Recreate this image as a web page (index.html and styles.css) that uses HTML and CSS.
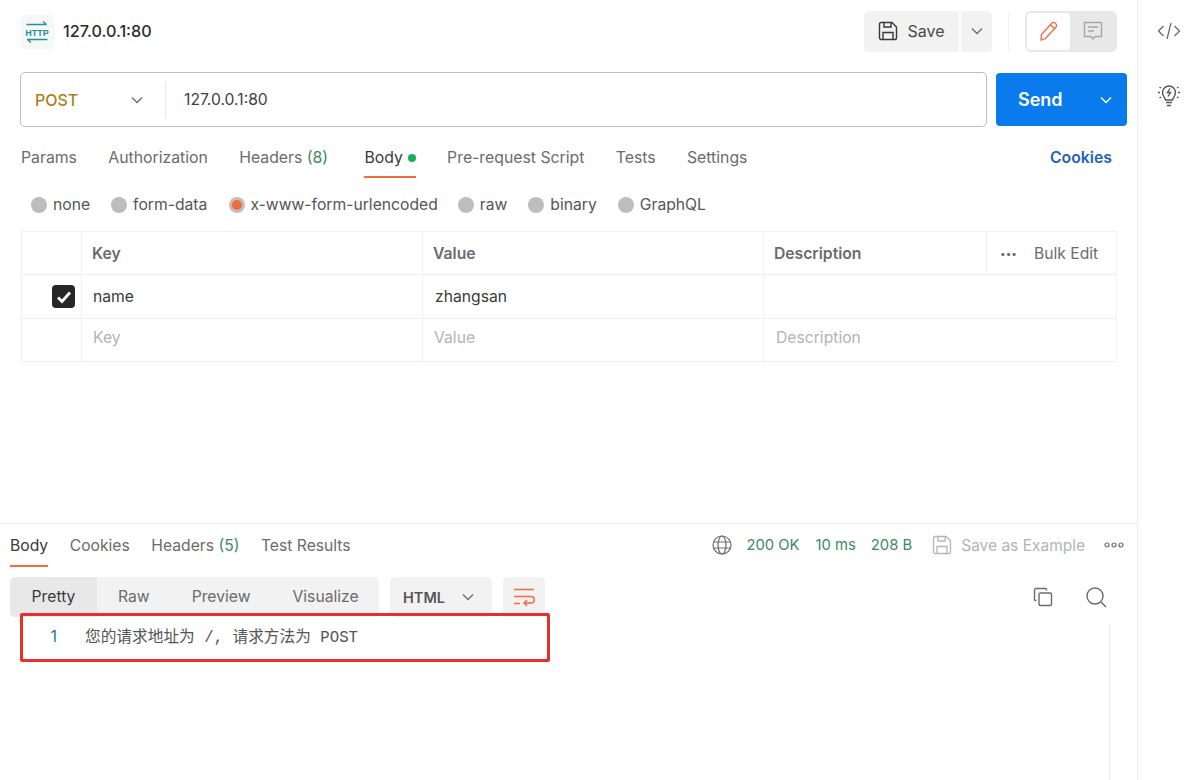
FILE: index.html
```html
<!DOCTYPE html>
<html lang="zh">
<head>
<meta charset="utf-8">
<title>127.0.0.1:80</title>
<link rel="stylesheet" href="styles.css">
</head>
<body>
<div class="app">
  <main class="main">
    <header class="head">
      <div class="http-icon">
        <svg width="26" height="24" viewBox="0 0 26 24" fill="none" stroke="#2a8f9c" stroke-width="1.300">
          <path d="M2.500 4.500H22.500M19 1.500L22.500 4.500"/>
          <path d="M3 19.500H23.500M7 22.500L3.500 19.500"/>
          <text x="13" y="15.800" text-anchor="middle" class="http-text">HTTP</text>
        </svg>
      </div>
      <div class="title">127.0.0.1:80</div>
      <div class="head-actions">
        <button class="btn save-btn">
          <svg width="20" height="20" viewBox="0 0 20 20" fill="none" stroke="#3a3a3a" stroke-width="1.400"><path d="M1.500 3a1.500 1.500 0 0 1 1.500-1.500h11l4.500 4.500v11a1.500 1.500 0 0 1-1.500 1.500H3a1.500 1.500 0 0 1-1.500-1.500z"/><path d="M6 1.500v4.500h7V1.500M5 18.500v-7h10v7"/></svg>
          <span>Save</span>
        </button>
        <button class="btn caret-btn">
          <svg class="chev" width="14" height="14" viewBox="0 0 14 14"><path d="M2 4.500L7 9.500L12 4.500"/></svg>
        </button>
        <span class="head-div"></span>
        <div class="toggle">
          <span class="toggle-on">
            <svg width="22" height="22" viewBox="0 0 22 22" fill="none" stroke="#f26b3a" stroke-width="1.300"><path d="M3.500 14.500L14 3a2 2 0 0 1 3 0l1 1a2 2 0 0 1 0 3L7.500 18.500L3 20z"/><path d="M12.500 5l4.500 4"/></svg>
          </span>
          <span class="toggle-off">
            <svg width="20" height="22" viewBox="0 0 20 22" fill="none" stroke="#a6a6a6" stroke-width="1.300"><path d="M1.500 2.500h17v14h-6.500L10 19l-2-2.500H1.500z"/><path d="M5 7h10M5 11h6"/></svg>
          </span>
        </div>
      </div>
    </header>

    <section class="req">
      <div class="url-box">
        <div class="method"><span>POST</span>
          <svg class="chev" width="14" height="14" viewBox="0 0 14 14"><path d="M2 4.500L7 9.500L12 4.500"/></svg>
        </div>
        <div class="url">127.0.0.1:80</div>
      </div>
      <div class="send">
        <span class="send-label">Send</span>
        <svg class="chev-white" width="14" height="14" viewBox="0 0 14 14"><path d="M2 4.500L7 9.500L12 4.500"/></svg>
      </div>
    </section>

    <nav class="tabs">
      <span class="tab">Params</span>
      <span class="tab">Authorization</span>
      <span class="tab">Headers <em class="count">(8)</em></span>
      <span class="tab active">Body<i class="dot"></i></span>
      <span class="tab">Pre-request Script</span>
      <span class="tab">Tests</span>
      <span class="tab">Settings</span>
      <span class="cookies">Cookies</span>
    </nav>

    <div class="radios">
      <label class="radio"><i class="bullet"></i>none</label>
      <label class="radio"><i class="bullet"></i>form-data</label>
      <label class="radio sel"><i class="bullet"></i>x-www-form-urlencoded</label>
      <label class="radio"><i class="bullet"></i>raw</label>
      <label class="radio"><i class="bullet"></i>binary</label>
      <label class="radio"><i class="bullet"></i>GraphQL</label>
    </div>

    <div class="table">
      <div class="row row-h">
        <div class="c c0"></div>
        <div class="c c1">Key</div>
        <div class="c c2">Value</div>
        <div class="c c3">Description</div>
        <div class="c c4"><span class="dots3">•••</span><span>Bulk Edit</span></div>
      </div>
      <div class="row">
        <div class="c c0"><span class="check"><svg width="16" height="16" viewBox="0 0 16 16" fill="none" stroke="#fff" stroke-width="2.800"><path d="M2 8.500L6 12.500L14 3.500"/></svg></span></div>
        <div class="c c1">name</div>
        <div class="c c2">zhangsan</div>
        <div class="c c34"></div>
      </div>
      <div class="row row-ph">
        <div class="c c0"></div>
        <div class="c c1">Key</div>
        <div class="c c2">Value</div>
        <div class="c c34">Description</div>
      </div>
    </div>

    <section class="resp">
      <div class="resp-tabs">
        <span class="rtab active">Body</span>
        <span class="rtab">Cookies</span>
        <span class="rtab">Headers <em class="count">(5)</em></span>
        <span class="rtab">Test Results</span>
        <div class="status">
          <svg width="20" height="20" viewBox="0 0 20 20" fill="none" stroke="#6b6b6b" stroke-width="1.200"><circle cx="10" cy="10" r="9"/><ellipse cx="10" cy="10" rx="4" ry="9"/><path d="M1.500 7h17M1.500 13h17"/></svg>
          <span class="ok ok1">200 OK</span>
          <span class="ok ok2">10 ms</span>
          <span class="ok ok3">208 B</span>
          <svg class="s-save" width="20" height="20" viewBox="0 0 20 20" fill="none" stroke="#b5b5b5" stroke-width="1.300"><path d="M1.500 3a1.500 1.500 0 0 1 1.500-1.500h11l4.500 4.500v11a1.500 1.500 0 0 1-1.500 1.500H3a1.500 1.500 0 0 1-1.500-1.500z"/><path d="M6 1.500v4.500h7V1.500M5 18.500v-7h10v7"/></svg>
          <span class="save-ex">Save as Example</span>
          <svg class="more" width="20" height="6" viewBox="0 0 20 6" fill="none" stroke="#6b6b6b" stroke-width="1.200"><circle cx="3" cy="3" r="2"/><circle cx="10" cy="3" r="2"/><circle cx="17" cy="3" r="2"/></svg>
        </div>
      </div>
      <div class="tools">
        <div class="seg">
          <span class="seg-i on">Pretty</span>
          <span class="seg-i s-raw">Raw</span>
          <span class="seg-i s-pre">Preview</span>
          <span class="seg-i s-vis">Visualize</span>
        </div>
        <div class="lang"><span class="lang-name">HTML</span><svg class="chev" width="14" height="14" viewBox="0 0 14 14"><path d="M2 4.500L7 9.500L12 4.500"/></svg></div>
        <div class="wrap">
          <svg width="22" height="20" viewBox="0 0 22 20" fill="none" stroke="#f26b3a" stroke-width="1.500"><path d="M1 2.500h20M1 9.500h17a3 3 0 0 1 0 6.500h-6M14 13l-3 3l3 3M1 16.500h6"/></svg>
        </div>
        <div class="tool-right">
          <svg width="20" height="20" viewBox="0 0 20 20" fill="none" stroke="#6b6b6b" stroke-width="1.400"><rect x="6" y="6" width="12.500" height="12.500" rx="1.500"/><path d="M3.500 13.500H2.500a1 1 0 0 1-1-1V3a1.500 1.500 0 0 1 1.500-1.500h9.500a1 1 0 0 1 1 1v1"/></svg>
          <svg width="22" height="22" viewBox="0 0 22 22" fill="none" stroke="#6b6b6b" stroke-width="1.400"><circle cx="10" cy="10" r="8"/><path d="M16 16l5 5"/></svg>
        </div>
      </div>
      <div class="code">
        <span class="ln">1</span>
        <span class="src">您的请求地址为 /, 请求方法为 POST</span>
        <span class="scroll-line"></span>
      </div>
      <div class="redbox"></div>
    </section>
  </main>
  <aside class="side">
    <svg width="24" height="18" viewBox="0 0 24 18" fill="none" stroke="#6b6b6b" stroke-width="1.300"><path d="M6.500 4L1.500 9l5 5M17.500 4l5 5l-5 5M14 1L10 17"/></svg>
    <svg width="24" height="24" viewBox="0 0 24 24" fill="none" stroke="#555" stroke-width="1.400"><path d="M8.500 17c0-2-3-3.500-3-7.500a6.500 6.500 0 0 1 13 0c0 4-3 5.500-3 7.500z"/><path d="M9 19.500h6M10 22.500h4M13 5.500l-2.500 4h3L11 13.500" /><path d="M1 9.500h2M21 9.500h2M2.500 4l1.500 1M21.500 4L20 5M2.500 15l1.500-1M21.500 15L20 14"/></svg>
  </aside>
</div>
</body>
</html>
```
FILE: styles.css
```css
* { box-sizing: border-box; }
html, body { margin: 0; padding: 0; height: 100%; background: #fff; }
body { font-family: Inter, "Noto Sans", sans-serif; font-size: 16px; color: #3a3a3a; overflow: hidden; }
button { font: inherit; color: inherit; border: 0; }
em { font-style: normal; }
i { display: block; }
svg { display: block; flex: none; }
.chev path, .chev-white path { fill: none; stroke: #6b6b6b; stroke-width: 1.300; }
.chev-white path { stroke: #fff; stroke-width: 1.500; }

.app { display: flex; width: 1200px; height: 780px; }
.main { width: 1137px; flex: none; }
.side { flex: 1; border-left: 1px solid #ededed; display: flex; flex-direction: column; align-items: center; padding-top: 22px; gap: 43px; }

.head { display: flex; align-items: center; height: 62px; padding: 0 20px 0 20px; }
.http-icon { width: 34px; height: 34px; background: #f6f7f7; border-radius: 5px; display: flex; align-items: center; justify-content: center; margin-top: 2px; }
.http-text { font-family: "Liberation Sans", sans-serif; font-size: 9px; font-weight: 700; fill: #2a8f9c; stroke: none; }
.title { margin-left: 9px; font-size: 16.200px; font-weight: 500; color: #2b2b2b; }
.head-actions { margin-left: auto; display: flex; align-items: center; height: 41px; }
.btn { height: 41px; background: #f2f2f2; display: flex; align-items: center; justify-content: center; }
.save-btn { width: 95px; gap: 9px; border-radius: 5px 0 0 5px; color: #4a4a4a; }
.caret-btn { width: 31px; margin-left: 2px; border-radius: 0 5px 5px 0; }
.head-div { width: 1px; height: 41px; background: #f2f2f2; margin: 0 16px; }
.toggle { width: 92px; height: 41px; background: #e8e8e8; border-radius: 6px; padding: 2px; display: flex; }
.toggle-on { width: 43px; background: #fff; border-radius: 4px; display: flex; align-items: center; justify-content: center; }
.toggle-off { flex: 1; display: flex; align-items: center; justify-content: center; }

.req { display: flex; height: 55px; margin-top: 10px; padding-left: 20px; }
.url-box { width: 967px; height: 55px; border: 1px solid #bdbdbd; border-radius: 5px; display: flex; align-items: center; }
.method { width: 145px; height: 36px; padding: 0 21px 0 14px; border-right: 1px solid #e6e6e6; display: flex; align-items: center; justify-content: space-between; color: #ad7f1c; font-weight: 500; font-size: 16px; }
.url { padding-left: 18px; font-size: 15.700px; color: #3f3f3f; }
.send { margin: 1px 0 0 9px; width: 131px; height: 53px; background: #097bed; border-radius: 4px; color: #fff; display: flex; align-items: center; font-weight: 600; font-size: 18px; padding-left: 22px; }
.send-label { width: 81px; }

.tabs { display: flex; height: 52px; margin-top: 1px; padding-left: 21px; gap: 31.300px; font-size: 15.800px; color: #6b6b6b; align-items: flex-start; }
.tab { height: 50px; padding-top: 20px; display: flex; white-space: pre; }
.count { color: #3d8a5f; }
.tab.active { margin-left: 5px; color: #3a3a3a; border-bottom: 2px solid #f26b3a; }
.dot { width: 8px; height: 8px; border-radius: 50%; background: #14b05a; margin: 6px 0 0 5px; }
.cookies { margin-left: auto; padding: 20px 25px 0 0; color: #1f63bd; font-weight: 600; }

.radios { display: flex; height: 25px; margin-top: 12px; padding-left: 31px; font-size: 15.700px; color: #555; gap: 21px; align-items: center; }
.radio { display: flex; align-items: center; gap: 6px; }
.bullet { width: 16px; height: 16px; border-radius: 50%; background: #bdbdbd; }
.sel { margin: 0 -1px 0 1px; gap: 5px; }
.sel .bullet { background: #f26b3a; border: 3px solid #c4bdb9; }

.table { margin: 14px 0 0 21px; width: 1096px; border: 1px solid #f0f0f0; font-size: 15.700px; }
.row { display: flex; height: 44px; border-bottom: 1px solid #f0f0f0; }
.row:last-child { border-bottom: 0; height: 42px; }
.row-h { height: 43px; font-weight: 600; color: #6b6b6b; }
.row-ph { color: #b3b3b3; }
.row-ph .c { padding-bottom: 5px; }
.c { display: flex; align-items: center; padding-left: 11px; border-right: 1px solid #f0f0f0; }
.c0 { width: 60px; padding: 0 6px 0 0; justify-content: flex-end; }
.c1 { width: 341px; }
.c2 { width: 341px; padding-left: 12px; }
.c3 { width: 223px; }
.c34 { padding-left: 12px; }
.row-h .c1, .row-h .c2, .row-h .c3 { padding-left: 10px; }
.row-ph .c2 { padding-left: 11px; }
.c4 { flex: 1; border-right: 0; font-weight: 400; padding-left: 13px; gap: 17px; }
.c34 { flex: 1; border-right: 0; }
.dots3 { font-size: 10px; }
.check { width: 23px; height: 23px; background: #262626; border-radius: 4px; display: flex; align-items: center; justify-content: center; }

.resp { position: relative; margin-top: 161px; border-top: 1px solid #ededed; }
.resp-tabs { display: flex; height: 43px; padding-left: 10px; gap: 21.500px; font-size: 15.700px; color: #6b6b6b; }
.rtab { padding-top: 12px; height: 43px; white-space: pre; }
.rtab.active { color: #3a3a3a; border-bottom: 2px solid #f26b3a; }
.status { margin-left: auto; display: flex; align-items: center; height: 42px; font-size: 14.800px; padding-right: 13px; }
.ok { color: #3d8a5f; }
.ok1 { margin-left: 14px; }
.ok2 { margin-left: 16px; }
.ok3 { margin-left: 15px; }
.s-save { margin-left: 20px; }
.save-ex { margin-left: 9px; color: #b3b3b3; font-size: 15.500px; }
.more { margin-left: 19px; }

.tools { display: flex; height: 41px; margin-top: 9px; padding-left: 10px; font-size: 15.700px; color: #6b6b6b; align-items: center; }
.seg { width: 369px; height: 40px; background: #f2f2f2; border-radius: 5px; display: flex; align-items: center; }
.seg-i { display: flex; align-items: center; height: 40px; }
.seg-i.on { width: 87px; justify-content: center; background: #e8e8e8; border-radius: 5px 0 0 5px; color: #3a3a3a; }
.s-raw { margin-left: 21px; }
.s-pre { margin-left: 42px; }
.s-vis { margin-left: 42px; }
.lang { margin-left: 11px; width: 102px; height: 40px; background: #f2f2f2; border-radius: 5px; display: flex; align-items: center; justify-content: space-between; padding: 0 17px 0 13px; font-weight: 600; font-size: 14.500px; color: #555; }
.lang-name { margin-top: 2px; }
.wrap { margin-left: 11px; width: 42px; height: 40px; background: #f2f2f2; border-radius: 4px; display: flex; align-items: center; justify-content: center; }
.tool-right { margin-left: auto; display: flex; align-items: center; gap: 32px; padding-right: 30px; }

.code { display: flex; position: relative; height: 170px; font-size: 15.700px; padding-top: 7px; }
.ln { width: 57px; margin-top: 2px; text-align: right; color: #2a7a82; font-family: Inter, sans-serif; font-size: 16px; }
.src { margin-left: 28px; color: #555; font-family: "Liberation Mono", "Noto Sans CJK SC", monospace; white-space: pre; }
.scroll-line { position: absolute; left: 1109px; top: 7px; bottom: 0; width: 1px; background: #e6e6e6; }
.redbox { position: absolute; left: 20px; top: 89px; width: 530px; height: 49px; border: 3px solid #e5312b; border-radius: 2px; }
```
